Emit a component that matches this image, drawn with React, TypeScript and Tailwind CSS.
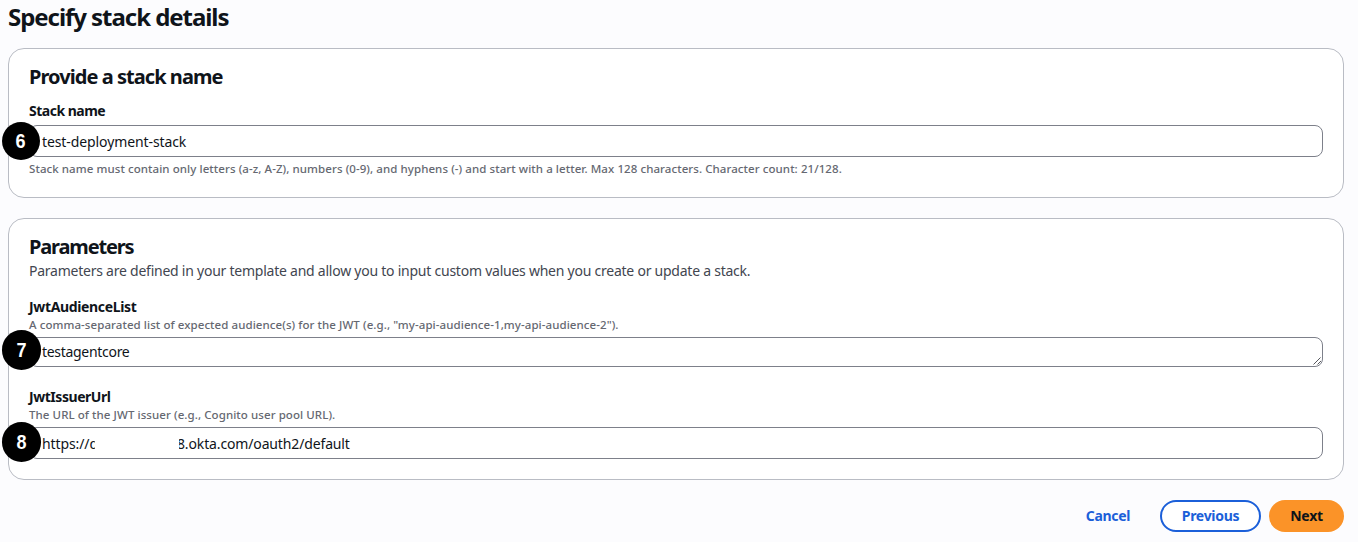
import type { ReactNode } from "react";

function Card({ className, children }: { className: string; children: ReactNode }) {
  return (
    <section className={`rounded-2xl border border-[#b9bcc4] bg-white px-5 ${className}`}>
      {children}
    </section>
  );
}

function Badge({ className, children }: { className: string; children: ReactNode }) {
  return (
    <span
      className={`absolute z-10 flex items-center justify-center rounded-full bg-black font-['Liberation_Sans',sans-serif] text-[20px] leading-none font-bold text-white ${className}`}
    >
      <span className="scale-x-90">{children}</span>
    </span>
  );
}

function Field({ className, children }: { className: string; children: ReactNode }) {
  return (
    <div
      className={`relative flex items-center rounded-lg border border-[#7d808a] bg-white pl-3 text-[14px] leading-5 whitespace-pre text-[#0f141a] ${className}`}
    >
      {children}
    </div>
  );
}

function Hint({ className = "", children }: { className?: string; children: ReactNode }) {
  return (
    <p className={`text-[11.5px] leading-4 font-medium tracking-[0.075px] text-[#656871] ${className}`}>{children}</p>
  );
}

export default function App() {
  return (
    <main className="flex h-[542px] w-[1358px] flex-col overflow-hidden bg-[#fcfcfe] pr-3.5 pl-2 font-['Noto_Sans','Open_Sans',sans-serif] whitespace-nowrap text-[#0f141a]">
      <h1 className="mt-[2px] h-[46px] text-[24px] leading-[30px] font-bold tracking-[-1.05px]">Specify stack details</h1>

      <Card className="h-[150px] pt-4">
        <h2 className="text-[20px] leading-6 font-bold tracking-[-0.95px]">Provide a stack name</h2>
        <div className="mt-3 text-[14px] leading-5 font-bold tracking-[-0.5px]">Stack name</div>
        <Field className="mt-1 h-8 pt-0.5">
          <Badge className="-top-[4px] -left-[28.5px] size-[38px]">6</Badge>
          <span className="tracking-[-0.1px]">test-deployment-stack</span>
        </Field>
        <Hint className="mt-1">
          Stack name must contain only letters (a-z, A-Z), numbers (0-9), and hyphens (-) and start with a letter. Max 128 characters. Character count: 21/128.
        </Hint>
      </Card>

      <Card className="mt-5 h-[262px] pt-4">
        <h2 className="text-[20px] leading-6 font-bold tracking-[-1.15px]">Parameters</h2>
        <p className="mt-0.5 text-[14px] leading-5 tracking-[-0.24px] text-[#424650]">
          Parameters are defined in your template and allow you to input custom values when you create or update a stack.
        </p>
        <div className="mt-4 text-[14px] leading-5 font-bold tracking-[-0.35px]">JwtAudienceList</div>
        <Hint>
          A comma-separated list of expected audience(s) for the JWT (e.g., "my-api-audience-1,my-api-audience-2").
        </Hint>
        <Field className="mt-1 h-[30px]">
          <Badge className="-top-[8px] -left-[28.5px] size-[39.5px]">7</Badge>
          <span className="tracking-[-0.3px]">testagentcore</span>
          <svg className="absolute right-0 bottom-0 size-[10px]" viewBox="0 0 10 10" fill="none" stroke="#55575d">
            <path d="M1.5 8.5 8.5 1.5M5.5 8.5 9 5" />
          </svg>
        </Field>
        <div className="mt-5 text-[14px] leading-5 font-bold tracking-[-0.45px]">JwtIssuerUrl</div>
        <Hint>The URL of the JWT issuer (e.g., Cognito user pool URL).</Hint>
        <Field className="mt-1 h-8 pt-0.5">
          <Badge className="-top-[6px] -left-[28.5px] size-[39.5px]">8</Badge>
          <span className="w-[135px] tracking-[-0.1px]">https://d</span>
          <span className="tracking-[-0.14px]">8.okta.com/oauth2/default</span>
          <span className="absolute top-1 left-[65px] h-6 w-[84px] bg-white" />
        </Field>
      </Card>

      <div className="mt-5 flex h-8 justify-end gap-2 text-[14px] font-bold">
        <button className="px-[22px] pb-px tracking-[-0.35px] text-[#1b5fd9]">Cancel</button>
        <button className="w-[101px] rounded-full border-2 border-[#1b5fd9] bg-white pb-px tracking-[-0.3px] text-[#1b5fd9]">Previous</button>
        <button className="w-[75px] rounded-full bg-[#fb9328] pb-px tracking-[-0.3px] text-[#0f141a]">Next</button>
      </div>
    </main>
  );
}
